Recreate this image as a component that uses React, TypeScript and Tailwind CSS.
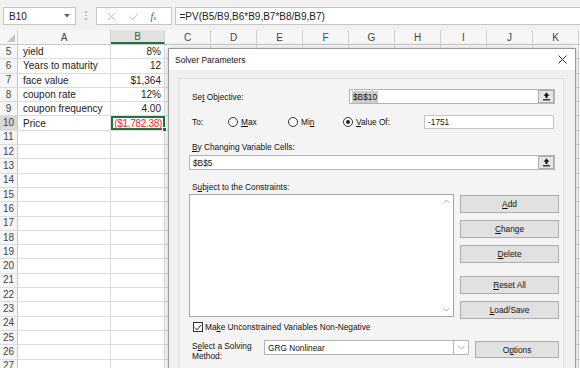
import React from "react";

const FONT = "font-['Liberation_Sans',Arial,sans-serif]";

type RowData = { n: number; a?: string; b?: string; red?: boolean; sel?: boolean };

const rows: RowData[] = [
  { n: 5, a: "yield", b: "8%" },
  { n: 6, a: "Years to maturity", b: "12" },
  { n: 7, a: "face value", b: "$1,364" },
  { n: 8, a: "coupon rate", b: "12%" },
  { n: 9, a: "coupon frequency", b: "4.00" },
  { n: 10, a: "Price", b: "($1,782.38)", red: true, sel: true },
  ...Array.from({ length: 17 }, (_, i) => ({ n: 11 + i })),
];

const cols = ["C", "D", "E", "F", "G", "H", "I", "J", "K"];

function U({ children }: { children: React.ReactNode }) {
  return <span className="underline underline-offset-[1px]">{children}</span>;
}

function RefButton() {
  return (
    <div className="flex h-full w-[16px] items-center justify-center border border-[#adadad] bg-[#e5e5e5]">
      <svg width="9" height="9" viewBox="0 0 9 9">
        <path d="M4.5 0.5 L1.5 3.8 H3.5 V6 H5.5 V3.8 H7.5 Z" fill="#111" />
        <rect x="1" y="7.2" width="7" height="1.2" fill="#111" />
      </svg>
    </div>
  );
}

function Radio({ checked }: { checked?: boolean }) {
  return (
    <div className="flex h-[10px] w-[10px] items-center justify-center rounded-full border border-[#333] bg-white">
      {checked && <div className="h-[4px] w-[4px] rounded-full bg-[#222]" />}
    </div>
  );
}

function DlgButton({ children }: { children: React.ReactNode }) {
  return (
    <div className="flex h-[18px] w-[99px] items-center justify-center border border-[#adadad] bg-[#e1e1e1] text-[8.3px] text-[#111]">
      {children}
    </div>
  );
}

function Chevron({ up }: { up?: boolean }) {
  return (
    <svg width="7" height="5" viewBox="0 0 7 5">
      <path d={up ? "M0.5 4 L3.5 1 L6.5 4" : "M0.5 1 L3.5 4 L6.5 1"} fill="none" stroke="#a8a8a8" strokeWidth="1" />
    </svg>
  );
}

export default function App() {
  return (
    <div className={`relative h-[368px] w-[580px] overflow-hidden bg-white ${FONT}`}>
      {/* formula bar */}
      <div className="flex h-[30px] items-start bg-[#f1f1f1] pt-[7px]">
        <div className="ml-[3px] flex h-[18px] w-[73px] items-center border border-[#c6c6c6] bg-white pl-[5px] text-[10px] text-[#222]">
          <span className="flex-1">B10</span>
          <svg width="6" height="4" viewBox="0 0 6 4" className="mr-[5px]">
            <path d="M0 0 H6 L3 3.5 Z" fill="#666" />
          </svg>
        </div>
        <div className="ml-[9px] mt-[4px] flex flex-col gap-[2px]">
          <div className="h-[1.5px] w-[1.5px] bg-[#b5b5b5]" />
          <div className="h-[1.5px] w-[1.5px] bg-[#b5b5b5]" />
          <div className="h-[1.5px] w-[1.5px] bg-[#b5b5b5]" />
        </div>
        <div className="ml-[9px] flex h-[18px] w-[76px] items-center border border-[#c6c6c6] bg-white">
          <svg width="9" height="9" viewBox="0 0 9 9" className="ml-[10px]">
            <path d="M1 1 L8 8 M8 1 L1 8" stroke="#c2c2c2" strokeWidth="1" />
          </svg>
          <svg width="10" height="9" viewBox="0 0 10 9" className="ml-[13px]">
            <path d="M1 5 L3.8 8 L9 1" fill="none" stroke="#c2c2c2" strokeWidth="1" />
          </svg>
          <span className="ml-[12px] font-['Liberation_Serif',serif] text-[10px] italic text-[#555]">
            f<span className="text-[7px]">x</span>
          </span>
        </div>
        <div className="ml-[3px] flex h-[18px] flex-1 items-center border border-r-0 border-[#c6c6c6] bg-white pl-[4px] text-[10px] text-[#222]">
          =PV(B5/B9,B6*B9,B7*B8/B9,B7)
        </div>
      </div>

      {/* sheet */}
      <div className="text-[10px] text-[#222]">
        <div className="flex h-[15px] border-b border-[#c8c8c8] bg-[#f6f6f6] text-[#444]">
          <div className="relative w-[18px] border-r border-[#d0d0d0]">
            <svg width="8" height="8" viewBox="0 0 8 8" className="absolute bottom-[2px] right-[2px]">
              <path d="M8 0 V8 H0 Z" fill="#c4c4c4" />
            </svg>
          </div>
          <div className="flex w-[93px] items-center justify-center border-r border-[#d0d0d0]">A</div>
          <div className="flex w-[54px] items-center justify-center border-b-2 border-r border-[#217346] border-r-[#d0d0d0] bg-[#e1e1e1] text-[#217346]">
            B
          </div>
          {cols.map((c) => (
            <div key={c} className="flex w-[46px] items-center justify-center border-r border-[#d0d0d0]">
              {c}
            </div>
          ))}
        </div>
        {rows.map((r) => (
          <div key={r.n} className="flex h-[14.3px] border-b border-[#dcdcdc]">
            <div
              className={`flex w-[18px] items-center justify-center border-r border-[#c8c8c8] leading-none text-[#444] ${
                r.sel ? "bg-[#d8d8d8]" : "bg-[#f6f6f6]"
              }`}
            >
              {r.n}
            </div>
            <div className="flex w-[93px] items-center border-r border-[#dcdcdc] pl-[5px]">{r.a}</div>
            <div
              className={`relative flex w-[54px] items-center justify-end ${
                r.sel ? "border-2 border-[#217346] pr-[1px] tracking-[-0.3px]" : "border-r border-[#dcdcdc] pr-[3px]"
              } ${r.red ? "text-[#ff2020]" : ""}`}
            >
              {r.b}
              {r.sel && (
                <div className="absolute bottom-[-4px] right-[-4px] h-[5px] w-[5px] border border-white bg-[#217346]" />
              )}
            </div>
            {cols.map((c) => (
              <div key={c} className="w-[46px] border-r border-[#dcdcdc]" />
            ))}
          </div>
        ))}
      </div>

      {/* Solver dialog */}
      <div className="absolute left-[168px] top-[48px] h-[330px] w-[408px] border border-[#9a9a9a] bg-[#efefef] text-[8.3px] leading-[12px] text-[#111] shadow-[0_0_6px_rgba(0,0,0,0.25)]">
        <div className="flex h-[21px] items-center bg-white pl-[6px] pr-[8px]">
          <span className="flex-1 text-[8.5px]">Solver Parameters</span>
          <svg width="9" height="9" viewBox="0 0 9 9">
            <path d="M0.5 0.5 L8.5 8.5 M8.5 0.5 L0.5 8.5" stroke="#333" strokeWidth="1" />
          </svg>
        </div>
        <div className="pl-[10px] pr-[11px] pt-[8px]">
          <div className="h-[300px] border border-[#dedede] bg-[#f4f4f4] pl-[9px] pt-[10px]">
            {/* set objective */}
            <div className="flex h-[15px] items-center">
              <div className="w-[160px] pl-[3px]">
                Se<U>t</U> Objective:
              </div>
              <div className="flex h-[15px] w-[206px] border border-[#b4b4b4] bg-white">
                <div className="flex flex-1 items-center pl-[2px]">
                  <span className="bg-[#cccccc] px-[1px]">$B$10</span>
                </div>
                <RefButton />
              </div>
            </div>
            {/* to */}
            <div className="mt-[11px] flex h-[14px] items-center">
              <div className="w-[39px] pl-[3px]">To:</div>
              <div className="flex w-[60px] items-center gap-[3px]">
                <Radio />
                <span>
                  <U>M</U>ax
                </span>
              </div>
              <div className="flex w-[55px] items-center gap-[3px]">
                <Radio />
                <span>
                  Mi<U>n</U>
                </span>
              </div>
              <div className="flex w-[81px] items-center gap-[3px]">
                <Radio checked />
                <span>
                  <U>V</U>alue Of:
                </span>
              </div>
              <div className="flex h-[14px] w-[130px] items-center border border-[#c4c4c4] bg-white pl-[3px]">-1751</div>
            </div>
            {/* changing cells */}
            <div className="mt-[12px] pl-[3px]">
              <U>B</U>y Changing Variable Cells:
            </div>
            <div className="mt-[2px] flex h-[15px] w-[366px] border border-[#b4b4b4] bg-white">
              <div className="flex flex-1 items-center pl-[3px]">$B$5</div>
              <RefButton />
            </div>
            {/* constraints */}
            <div className="mt-[11px] pl-[3px]">
              S<U>u</U>bject to the Constraints:
            </div>
            <div className="mt-[1px] flex h-[125px]">
              <div className="flex h-[123px] w-[265px] border border-[#a6a6a6] bg-white">
                <div className="flex-1" />
                <div className="flex w-[14px] flex-col items-center justify-between py-[4px]">
                  <Chevron up />
                  <Chevron />
                </div>
              </div>
              <div className="ml-[6px] flex flex-col pt-[1px]">
                <DlgButton>
                  <U>A</U>dd
                </DlgButton>
                <div className="mt-[7px]">
                  <DlgButton>
                    <U>C</U>hange
                  </DlgButton>
                </div>
                <div className="mt-[7px]">
                  <DlgButton>
                    <U>D</U>elete
                  </DlgButton>
                </div>
                <div className="mt-[13px]">
                  <DlgButton>
                    <U>R</U>eset All
                  </DlgButton>
                </div>
                <div className="mt-[7px]">
                  <DlgButton>
                    <U>L</U>oad/Save
                  </DlgButton>
                </div>
              </div>
            </div>
            {/* checkbox */}
            <div className="mt-[3px] flex h-[10px] items-center pl-[4px]">
              <div className="flex h-[10px] w-[10px] items-center justify-center border border-[#333] bg-white">
                <svg width="8" height="7" viewBox="0 0 8 7">
                  <path d="M0.8 3.5 L3 5.8 L7.3 0.8" fill="none" stroke="#222" strokeWidth="1" />
                </svg>
              </div>
              <span className="ml-[2px]">
                Ma<U>k</U>e Unconstrained Variables Non-Negative
              </span>
            </div>
            {/* method */}
            <div className="mt-[8px] flex items-start">
              <div className="w-[75px] pl-[3px] leading-[9.5px]">
                <div className="mt-[2px]">
                  S<U>e</U>lect a Solving
                </div>
                <div>Method:</div>
              </div>
              <div className="flex h-[15px] w-[205px] border border-[#b4b4b4] bg-white">
                <div className="flex flex-1 items-center pl-[3px]">GRG Nonlinear</div>
                <div className="flex w-[15px] items-center justify-center border-l border-[#b4b4b4]">
                  <Chevron />
                </div>
              </div>
              <div className="ml-[6px] mt-[1px] flex h-[17px] w-[84px] items-center justify-center border border-[#adadad] bg-[#e1e1e1]">
                O<U>p</U>tions
              </div>
            </div>
          </div>
        </div>
      </div>
    </div>
  );
}
